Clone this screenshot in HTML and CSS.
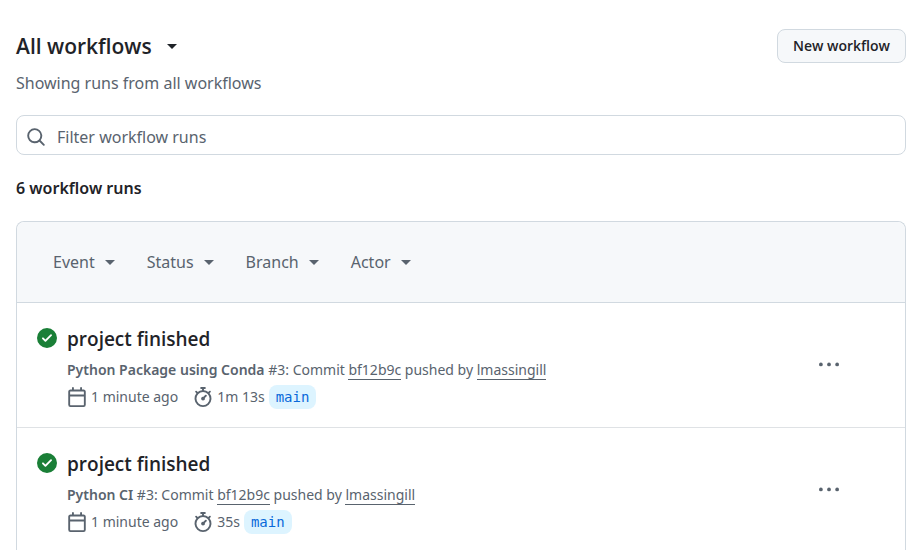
FILE: index.html
```html
<!DOCTYPE html>
<html lang="en">
<head>
<meta charset="utf-8">
<meta name="viewport" content="width=device-width, initial-scale=1">
<title>Workflow runs</title>
<link rel="stylesheet" href="styles.css">
</head>
<body>
<svg class="sprite" aria-hidden="true">
  <symbol id="search" viewBox="0 0 16 16"><path d="M10.68 11.74a6 6 0 0 1-7.922-8.982 6 6 0 0 1 8.982 7.922l3.04 3.04a.749.749 0 0 1-.326 1.275.749.749 0 0 1-.734-.215ZM11.5 7a4.499 4.499 0 1 0-8.997 0A4.499 4.499 0 0 0 11.5 7Z"/></symbol>
  <symbol id="check" viewBox="0 0 16 16"><path d="M8 16A8 8 0 1 1 8 0a8 8 0 0 1 0 16Zm3.78-9.72a.751.751 0 0 0-.018-1.042.751.751 0 0 0-1.042-.018L6.75 9.19 5.28 7.72a.751.751 0 0 0-1.042.018.751.751 0 0 0-.018 1.042l2 2a.75.75 0 0 0 1.06 0Z"/></symbol>
  <symbol id="calendar" viewBox="0 0 16 16"><path d="M4.75 0a.75.75 0 0 1 .75.75V2h5V.75a.75.75 0 0 1 1.5 0V2h1.25c.966 0 1.75.784 1.75 1.75v10.5A1.75 1.75 0 0 1 13.25 16H2.75A1.75 1.75 0 0 1 1 14.25V3.75C1 2.784 1.784 2 2.75 2H4V.75A.75.75 0 0 1 4.75 0ZM2.5 7.5v6.75c0 .138.112.25.25.25h10.5a.25.25 0 0 0 .25-.25V7.5Zm10.75-4H2.75a.25.25 0 0 0-.25.25V6h11V3.75a.25.25 0 0 0-.25-.25Z"/></symbol>
  <symbol id="stopwatch" viewBox="0 0 16 16"><path d="M5.75.75A.75.75 0 0 1 6.5 0h3a.75.75 0 0 1 0 1.5h-.75v1l-.001.041a6.724 6.724 0 0 1 3.464 1.435l.007-.006.75-.75a.749.749 0 0 1 1.275.326.749.749 0 0 1-.215.734l-.75.75-.006.007a6.75 6.75 0 1 1-10.548 0L2.72 5.03l-.75-.75a.751.751 0 0 1 .018-1.042.751.751 0 0 1 1.042-.018l.75.75.007.006A6.72 6.72 0 0 1 7.25 2.541V1.5H6.5a.75.75 0 0 1-.75-.75ZM8 14.5a5.25 5.25 0 1 0-.001-10.501A5.25 5.25 0 0 0 8 14.5Zm.389-6.7 1.33-1.33a.75.75 0 1 1 1.061 1.06L9.45 8.861A1.503 1.503 0 0 1 8 10.75a1.499 1.499 0 1 1 .389-2.95Z"/></symbol>
  <symbol id="dots" viewBox="0 0 16 16"><circle cx="1.5" cy="7.5" r="1.5"/><circle cx="8" cy="7.5" r="1.5"/><circle cx="14.5" cy="7.5" r="1.5"/></symbol>
</svg>
<main class="page">
  <header class="header">
    <div>
      <h1 class="title"><button class="title-button" type="button">All workflows <span class="caret"></span></button></h1>
      <p class="subtitle">Showing runs from all workflows</p>
    </div>
    <button class="new-workflow" type="button">New workflow</button>
  </header>
  <form class="filter" role="search">
    <svg class="icon"><use href="#search"/></svg>
    <input class="filter-input" type="text" aria-label="Filter workflow runs" placeholder="Filter workflow runs">
  </form>
  <h2 class="count">6 workflow runs</h2>
  <section class="runs">
    <div class="toolbar">
      <button class="menu" type="button">Event <span class="caret"></span></button>
      <button class="menu" type="button">Status <span class="caret"></span></button>
      <button class="menu" type="button">Branch <span class="caret"></span></button>
      <button class="menu" type="button">Actor <span class="caret"></span></button>
    </div>
    <article class="run">
      <svg class="icon status" role="img" aria-label="Success"><use href="#check"/></svg>
      <div class="run-body">
        <h3 class="run-title"><a href="#">project finished</a></h3>
        <p class="detail"><b>Python Package using Conda</b> #3: Commit <a href="#">bf12b9c</a> pushed by <a href="#">lmassingill</a></p>
        <div class="meta">
          <span class="meta-item time"><svg class="icon"><use href="#calendar"/></svg>1 minute ago</span>
          <span class="meta-item"><svg class="icon"><use href="#stopwatch"/></svg>1m 13s</span>
          <a class="branch" href="#">main</a>
        </div>
      </div>
      <button class="more" type="button" aria-label="Show options"><svg class="icon"><use href="#dots"/></svg></button>
    </article>
    <article class="run">
      <svg class="icon status" role="img" aria-label="Success"><use href="#check"/></svg>
      <div class="run-body">
        <h3 class="run-title"><a href="#">project finished</a></h3>
        <p class="detail"><b>Python CI</b> #3: Commit <a href="#">bf12b9c</a> pushed by <a href="#">lmassingill</a></p>
        <div class="meta">
          <span class="meta-item time"><svg class="icon"><use href="#calendar"/></svg>1 minute ago</span>
          <span class="meta-item"><svg class="icon"><use href="#stopwatch"/></svg>35s</span>
          <a class="branch" href="#">main</a>
        </div>
      </div>
      <button class="more" type="button" aria-label="Show options"><svg class="icon"><use href="#dots"/></svg></button>
    </article>
  </section>
</main>
</body>
</html>
```
FILE: styles.css
```css
* { box-sizing: border-box; }
body {
  margin: 0;
  background: #fff;
  color: #1f2328;
  font-family: "Noto Sans", sans-serif;
  font-size: 16px;
  line-height: 26px;
}
h1, h2, h3, p { margin: 0; font-weight: 400; }
button { padding: 0; border: 0; background: none; color: inherit; font: inherit; }
a { color: inherit; text-decoration: none; }
.sprite { display: none; }
.icon { display: block; flex: none; width: 20px; height: 20px; fill: #59636e; }
.caret { border: 5px solid transparent; border-top-color: currentColor; border-bottom: 0; }

.page { padding: 29px 15px 0 16px; }
.header { display: flex; justify-content: space-between; align-items: flex-start; }
.title-button, .new-workflow, .run-title { font-family: "Open Sans", sans-serif; font-weight: 600; }
.title-button { display: flex; align-items: center; gap: 15px; font-size: 21px; line-height: 34px; }
.subtitle { margin-top: 7px; color: #59636e; }
.new-workflow {
  height: 34px;
  padding: 0 15px 1px;
  border: 1px solid #d1d9e0;
  border-radius: 8px;
  background: #f6f8fa;
  font-size: 14px;
}
.filter {
  display: flex;
  align-items: center;
  gap: 11px;
  height: 40px;
  margin-top: 19px;
  padding: 3px 9px 0;
  border: 1px solid #d1d9e0;
  border-radius: 8px;
}
.filter-input { flex: 1; min-width: 0; padding: 0; border: 0; outline: 0; background: none; color: inherit; font: inherit; }
.filter-input::placeholder { color: #59636e; opacity: 1; }
.count { margin: 20px 0; font-size: 16px; font-weight: 600; }

.runs { border: 1px solid #d1d9e0; border-bottom: 0; border-radius: 8px 8px 0 0; }
.toolbar {
  display: flex;
  gap: 32px;
  padding: 27px 36px;
  border-bottom: 1px solid #d1d9e0;
  border-radius: 8px 8px 0 0;
  background: #f6f8fa;
  color: #59636e;
}
.menu { display: flex; align-items: center; gap: 10px; }
.run { display: flex; align-items: flex-start; padding: 20px 66px 18px 20px; }
.run + .run { border-top: 1px solid #dfe2e5; }
.status { margin-top: 5px; fill: #1a7f37; }
.run-body { flex: 1; min-width: 0; margin-left: 10px; }
.run-title { font-size: 19px; line-height: 32px; }
.detail, .meta { color: #59636e; font-size: 14px; }
.detail { line-height: 30px; }
.detail b { font-weight: 600; }
.detail a { border-bottom: 1px solid #59636e; }
.meta { display: flex; align-items: center; height: 24px; }
.meta-item { display: flex; align-items: center; gap: 4px; }
.time { margin-right: 15px; }
.branch {
  margin-left: 4px;
  padding: 0 7px;
  border-radius: 8px;
  background: #ddf4ff;
  color: #0969da;
  font-family: "DejaVu Sans Mono", monospace;
  font-size: 14px;
  line-height: 24px;
}
.more { align-self: center; margin-bottom: 2px; }
```
